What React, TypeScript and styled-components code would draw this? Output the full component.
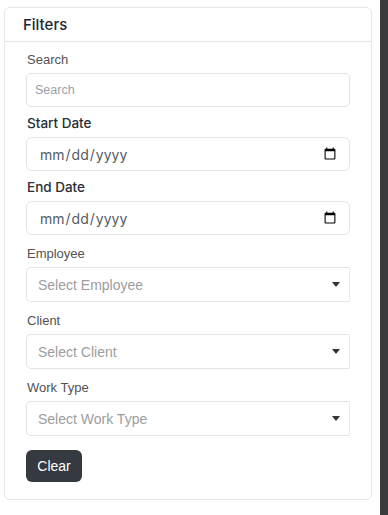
import React from "react";
import styled, { createGlobalStyle } from "styled-components";

const GlobalStyle = createGlobalStyle`
  html, body {
    margin: 0;
    padding: 0;
    background: #ffffff;
  }
  * {
    box-sizing: border-box;
  }
`;

const Page = styled.div`
  display: flex;
  width: 388px;
  height: 515px;
  overflow: hidden;
  font-family: "Liberation Sans", Arial, sans-serif;
`;

const Main = styled.div`
  width: 380px;
  padding: 7px 0 0 4px;
`;

const Scrollbar = styled.div`
  width: 8px;
  height: 100%;
  background: #3b3b3e;
`;

const Card = styled.div`
  width: 368px;
  height: 493px;
  border: 1px solid #e3e6ea;
  border-radius: 6px;
  background: #fff;
  display: flex;
  flex-direction: column;
`;

const CardHeader = styled.div`
  height: 34px;
  padding: 0 0 0 18px;
  display: flex;
  align-items: center;
  border-bottom: 1px solid #e3e6ea;
  font-family: "Inter", "Liberation Sans", sans-serif;
  font-size: 15px;
  font-weight: 500;
  color: #1f2533;
`;

const CardBody = styled.div`
  padding: 8px 21px 0 21px;
  display: flex;
  flex-direction: column;
`;

const Field = styled.div<{ $top: number; $gap: number }>`
  display: flex;
  flex-direction: column;
  margin-top: ${({ $top }) => $top}px;
  gap: ${({ $gap }) => $gap}px;
`;

const Label = styled.label<{ $strong?: boolean }>`
  height: 20px;
  line-height: 20px;
  padding-left: 1px;
  font-family: ${({ $strong }) =>
    $strong ? `"Inter", "Liberation Sans", sans-serif` : `"Liberation Sans", Arial, sans-serif`};
  font-size: ${({ $strong }) => ($strong ? "13.5px" : "13px")};
  font-weight: ${({ $strong }) => ($strong ? 500 : 400)};
  color: ${({ $strong }) => ($strong ? "#2a2e35" : "#525252")};
`;

const TextInput = styled.input`
  width: 100%;
  height: 34px;
  border: 1px solid #dfe2e6;
  border-radius: 5px;
  padding: 0 8px;
  font-family: "Liberation Sans", Arial, sans-serif;
  font-size: 12.5px;
  color: #333;
  outline: none;
  &::placeholder {
    color: #9a9fa5;
  }
`;

const DateInput = styled.input`
  width: 100%;
  height: 34px;
  border: 1px solid #e1e3e6;
  border-radius: 6px;
  padding: 0 10px 0 12px;
  font-family: "Inter", "Liberation Sans", sans-serif;
  font-size: 14px;
  color: #545b66;
  outline: none;
  background: #fff;
`;

const SelectBox = styled.div`
  width: 100%;
  height: 35px;
  border: 1px solid #e4e4e4;
  border-right-color: #ececec;
  border-radius: 5px 0 0 5px;
  padding: 0 9px 0 11px;
  display: flex;
  align-items: center;
  justify-content: space-between;
  font-family: "Liberation Sans", Arial, sans-serif;
  font-size: 14px;
  color: #9d9d9d;
`;

const Caret = styled.span`
  width: 0;
  height: 0;
  border-left: 4px solid transparent;
  border-right: 4px solid transparent;
  border-top: 5px solid #333;
`;

const ClearButton = styled.button`
  margin-top: 14px;
  width: 56px;
  height: 32px;
  border: none;
  border-radius: 6px;
  background: #343a40;
  color: #fff;
  font-family: "Liberation Sans", Arial, sans-serif;
  font-size: 14px;
  cursor: pointer;
  padding: 0;
`;

const selects = [
  { label: "Employee", placeholder: "Select Employee" },
  { label: "Client", placeholder: "Select Client" },
  { label: "Work Type", placeholder: "Select Work Type" },
];

export default function App() {
  return (
    <>
      <GlobalStyle />
      <Page>
        <Main>
          <Card>
            <CardHeader>Filters</CardHeader>
            <CardBody>
              <Field $top={0} $gap={3}>
                <Label>Search</Label>
                <TextInput placeholder="Search" />
              </Field>
              <Field $top={6} $gap={4}>
                <Label $strong>Start Date</Label>
                <DateInput type="date" />
              </Field>
              <Field $top={6} $gap={4}>
                <Label $strong>End Date</Label>
                <DateInput type="date" />
              </Field>
              {selects.map((s) => (
                <Field key={s.label} $top={9} $gap={3}>
                  <Label>{s.label}</Label>
                  <SelectBox>
                    {s.placeholder}
                    <Caret />
                  </SelectBox>
                </Field>
              ))}
              <ClearButton>Clear</ClearButton>
            </CardBody>
          </Card>
        </Main>
        <Scrollbar />
      </Page>
    </>
  );
}
